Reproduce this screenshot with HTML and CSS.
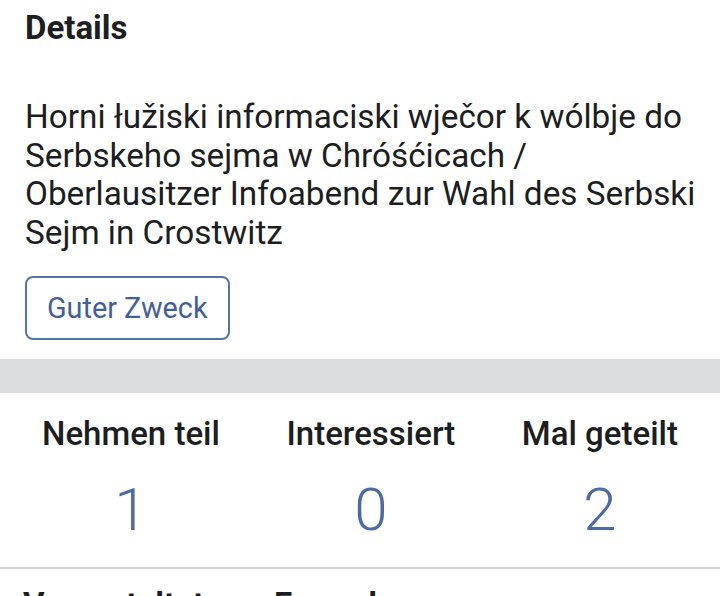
FILE: index.html
```html
<!DOCTYPE html>
<html lang="de">
<head>
<meta charset="utf-8">
<link rel="stylesheet" href="styles.css">
</head>
<body>
<section class="details">
  <h2 class="title">Details</h2>
  <p class="desc">Horni łužiski informaciski wječor k wólbje do Serbskeho sejma w Chróśćicach / Oberlausitzer Infoabend zur Wahl des Serbski Sejm in Crostwitz</p>
  <div class="tags"><span class="tag">Guter Zweck</span></div>
</section>
<div class="band"></div>
<section class="stats">
  <div class="stat"><div class="label">Nehmen teil</div><div class="num">1</div></div>
  <div class="stat"><div class="label">Interessiert</div><div class="num">0</div></div>
  <div class="stat"><div class="label">Mal geteilt</div><div class="num">2</div></div>
</section>
<section class="next">
  <h2 class="title">Veranstaltet von Freunden</h2>
</section>
</body>
</html>
```
FILE: styles.css
```css
* { box-sizing: border-box; }
html, body { margin: 0; padding: 0; background: #fff; }
body { font-family: Roboto, "Noto Sans", sans-serif; color: #1c1e21; width: 720px; overflow: hidden; }
.details { padding: 8px 18px 18px 25px; }
.title { margin: 0; font-size: 33px; font-weight: 700; line-height: 40px; color: #1c1e21; }
.desc { margin: 50px 0 0; font-size: 33.3px; line-height: 38.5px; font-weight: 400; }
.tags { margin-top: 24px; display: flex; }
.tag { display: inline-flex; align-items: center; height: 64px; padding: 0 20px; border: 2px solid #5373ad; border-radius: 8px; color: #3f5f9d; font-size: 28.8px; }
.band { height: 34px; margin-top: 1px; background: #dcdde1; }
.stats { display: flex; justify-content: space-between; padding: 23px 42px 27px; border-bottom: 2px solid #d3d4d8; }
.stat { display: flex; flex-direction: column; align-items: center; }
.label { font-size: 33px; font-weight: 500; line-height: 36px; color: #1c1e21; }
.num { margin-top: 28px; font-size: 60px; font-weight: 300; line-height: 60px; color: #4a6aa8; }
.next { padding: 16px 23px 0; }
```
